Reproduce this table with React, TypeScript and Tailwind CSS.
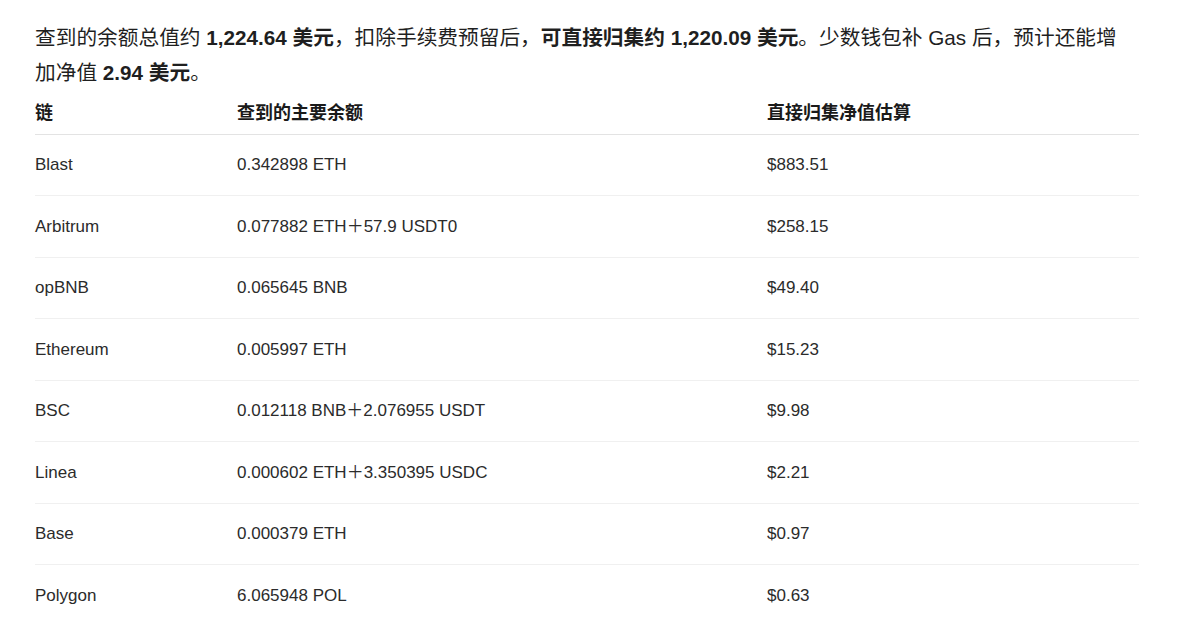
import React from "react";

const rows = [
  ["Blast", "0.342898 ETH", "$883.51"],
  ["Arbitrum", "0.077882 ETH＋57.9 USDT0", "$258.15"],
  ["opBNB", "0.065645 BNB", "$49.40"],
  ["Ethereum", "0.005997 ETH", "$15.23"],
  ["BSC", "0.012118 BNB＋2.076955 USDT", "$9.98"],
  ["Linea", "0.000602 ETH＋3.350395 USDC", "$2.21"],
  ["Base", "0.000379 ETH", "$0.97"],
  ["Polygon", "6.065948 POL", "$0.63"],
];

export default function App() {
  return (
    <div
      className="min-h-screen bg-white pl-[35px] pt-[20px] text-[#1f1f1f]"
      style={{ fontFamily: '"Liberation Sans", "Noto Sans CJK SC", sans-serif' }}
    >
      <div className="w-[1104px]">
        <p className="w-[1090px] text-[20.7px] leading-[35px]">
          查到的余额总值约 <b>1,224.64 美元</b>，扣除手续费预留后，<b>可直接归集约 1,220.09 美元</b>。少数钱包补 Gas 后，预计还能增加净值 <b>2.94 美元</b>。
        </p>
        <div className="mt-[2px]">
          <div className="grid h-[43px] grid-cols-[202px_530px_1fr] items-center border-b border-[#e3e3e3] text-[18px] font-bold text-[#1a1a1a]">
            <div>链</div>
            <div>查到的主要余额</div>
            <div>直接归集净值估算</div>
          </div>
          {rows.map((r, i) => (
            <div
              key={r[0]}
              className={
                "grid h-[61.43px] grid-cols-[202px_530px_1fr] items-center text-[17px] text-[#2b2b2b] " +
                (i < rows.length - 1 ? "border-b border-[#f0f0f0]" : "")
              }
            >
              <div>{r[0]}</div>
              <div>{r[1]}</div>
              <div>{r[2]}</div>
            </div>
          ))}
        </div>
      </div>
    </div>
  );
}
